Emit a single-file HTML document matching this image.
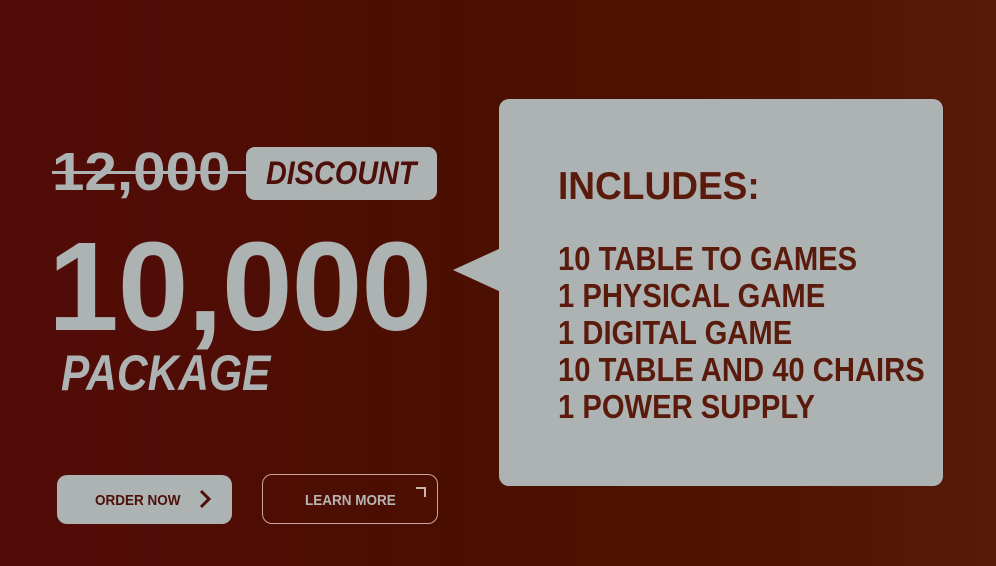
<!DOCTYPE html>
<html><head><style>
*{margin:0;padding:0;box-sizing:border-box}
body{width:996px;height:566px;overflow:hidden;position:relative;font-family:"Liberation Sans",sans-serif;font-weight:bold;
background:linear-gradient(90deg,#530b08 0%,#4b0f02 45%,#4f1302 75%,#571a08 100%);}
.t{position:absolute;white-space:nowrap;transform-origin:left top}
.panel{position:absolute;left:499px;top:99px;width:444px;height:387px;background:#adb3b3;border-radius:10px}
.ptr{position:absolute;left:453px;top:248px;width:0;height:0;border-top:22px solid transparent;border-bottom:22px solid transparent;border-right:48px solid #adb3b3}
.inc{color:#5a1a0c;font-size:33px;transform:scaleX(.885);left:558px}
</style></head><body>
<div class="t" style="left:52px;top:141px;font-size:54px;color:#adb3b3;transform:scaleX(1.08)">12,000</div>
<div style="position:absolute;left:52px;top:171px;width:196px;height:3px;background:#adb3b3"></div>
<div style="position:absolute;left:246px;top:147px;width:191px;height:53px;background:#adb3b3;border-radius:9px"></div>
<div class="t" style="left:266px;top:155px;font-size:32px;color:#4e0f0a;font-style:italic;transform:scaleX(.9)">DISCOUNT</div>
<div class="t" style="left:48px;top:214px;font-size:126px;color:#adb3b3;letter-spacing:-1px;transform:scaleX(1.01)">10,000</div>
<div class="t" style="left:61px;top:344px;font-size:50px;color:#adb3b3;font-style:italic;transform:scaleX(.85)">PACKAGE</div>
<div style="position:absolute;left:57px;top:475px;width:175px;height:49px;background:#adb3b3;border-radius:10px"></div>
<div class="t" style="left:95px;top:492px;font-size:15px;color:#4e0f0a;transform:scaleX(.9)">ORDER NOW</div>
<svg style="position:absolute;left:198px;top:488px" width="16" height="22"><path d="M3 3 L11 11 L3 19" stroke="#4e0f0a" stroke-width="3" fill="none"/></svg>
<div style="position:absolute;left:262px;top:474px;width:176px;height:50px;border:1.5px solid #c9a4a0;border-radius:10px"></div>
<div class="t" style="left:305px;top:492px;font-size:15px;color:#b8b4b2;transform:scaleX(.9)">LEARN MORE</div>
<svg style="position:absolute;left:414px;top:485px" width="14" height="14"><path d="M2 3 H11 V12" stroke="#c9b4b0" stroke-width="2" fill="none"/></svg>
<div class="ptr"></div>
<div class="panel"></div>
<div class="t inc" style="top:165px;font-size:39px;transform:scaleX(.95)">INCLUDES:</div>
<div class="t inc" style="top:240px">10 TABLE TO GAMES</div>
<div class="t inc" style="top:277px">1 PHYSICAL GAME</div>
<div class="t inc" style="top:314px">1 DIGITAL GAME</div>
<div class="t inc" style="top:351px">10 TABLE AND 40 CHAIRS</div>
<div class="t inc" style="top:388px">1 POWER SUPPLY</div>
</body></html>
